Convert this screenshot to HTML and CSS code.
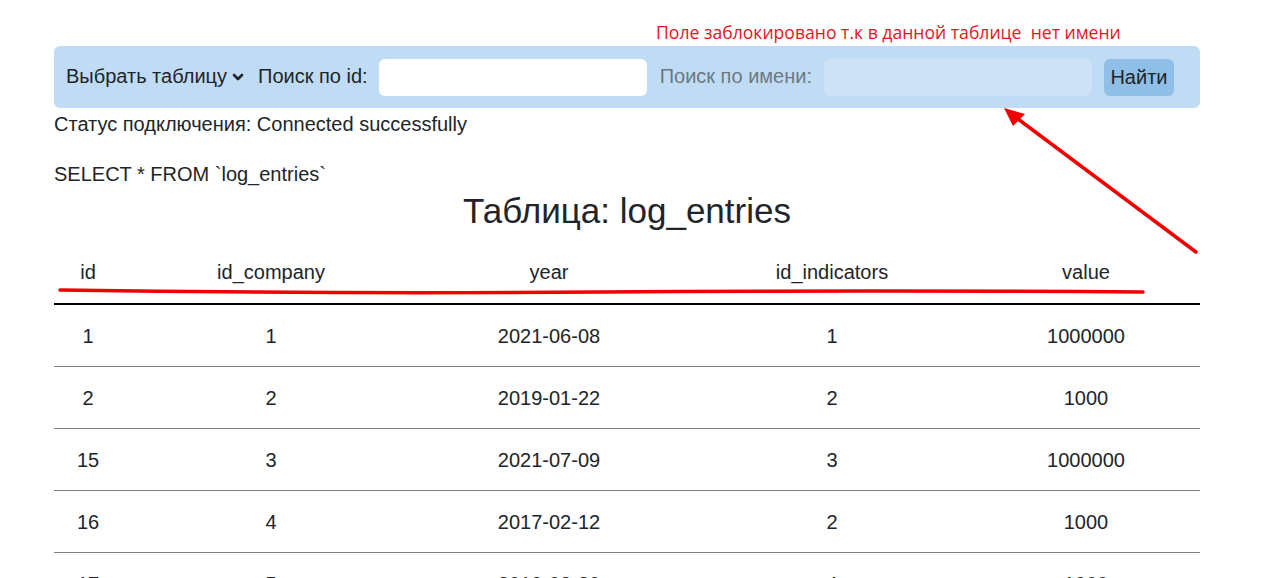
FILE: index.html
```html
<!DOCTYPE html>
<html lang="ru">
<head>
<meta charset="utf-8">
<title>log_entries</title>
<link rel="stylesheet" href="styles.css">
</head>
<body>
<div class="page">
  <nav class="toolbar">
    <div class="select">Выбрать таблицу
      <svg class="chev" width="12" height="10" viewBox="0 0 12 10"><path d="M2 3 L6 7 L10 3" fill="none" stroke="#212529" stroke-width="2.6" stroke-linecap="round" stroke-linejoin="round"/></svg>
    </div>
    <label class="lbl">Поиск по id:</label>
    <div class="input"></div>
    <label class="lbl lbl-disabled">Поиск по имени:</label>
    <div class="input input-disabled"></div>
    <button class="btn">Найти</button>
  </nav>
  <p class="status">Статус подключения: Connected successfully</p>
  <p class="query">SELECT * FROM `log_entries`</p>
  <h2 class="title">Таблица: log_entries</h2>
  <table class="data">
    <colgroup>
      <col class="c1"><col class="c2"><col class="c3"><col class="c4"><col class="c5">
    </colgroup>
    <thead>
      <tr><th>id</th><th>id_company</th><th>year</th><th>id_indicators</th><th class="last">value</th></tr>
    </thead>
    <tbody>
      <tr><td>1</td><td>1</td><td>2021-06-08</td><td>1</td><td class="last">1000000</td></tr>
      <tr><td>2</td><td>2</td><td>2019-01-22</td><td>2</td><td class="last">1000</td></tr>
      <tr><td>15</td><td>3</td><td>2021-07-09</td><td>3</td><td class="last">1000000</td></tr>
      <tr><td>16</td><td>4</td><td>2017-02-12</td><td>2</td><td class="last">1000</td></tr>
      <tr><td>17</td><td>5</td><td>2019-03-30</td><td>4</td><td class="last">1000</td></tr>
    </tbody>
  </table>
</div>
<div class="note">Поле заблокировано т.к в данной таблице&nbsp; нет имени</div>
<svg class="marks" width="1271" height="578" viewBox="0 0 1271 578">
  <path d="M60 290 Q 330 294 600 292 T 1143 292" fill="none" stroke="#f00000" stroke-width="3.5" stroke-linecap="round"/>
  <line x1="1196" y1="252" x2="1014" y2="116" stroke="#f00000" stroke-width="3.5" stroke-linecap="round"/>
  <polygon points="1004,108 1025,114 1013,126" fill="#f00000"/>
</svg>
</body>
</html>
```
FILE: styles.css
```css
html, body {
  margin: 0;
  padding: 0;
  background: #ffffff;
}
body {
  font-family: "Liberation Sans", Arial, sans-serif;
  color: #212529;
  font-size: 20px;
  position: relative;
  overflow: hidden;
  height: 578px;
}
.page {
  width: 1146px;
  margin-left: 54px;
  padding-top: 46px;
}
.toolbar {
  height: 62px;
  background: #c0dcf4;
  border-radius: 6px;
  display: flex;
  align-items: center;
  padding: 0 12px 2px;
  box-sizing: border-box;
}
.select {
  display: flex;
  align-items: center;
  gap: 5px;
  margin-right: 14px;
}
.chev {
  margin-top: 1px;
}
.lbl {
  margin-right: 11px;
}
.lbl-disabled {
  color: #6d7882;
  margin-right: 12px;
}
.input {
  width: 268px;
  height: 37px;
  border-radius: 6px;
  background: #ffffff;
  margin-right: 13px;
  margin-top: 2px;
}
.input-disabled {
  background: #cde2f5;
  margin-right: 12px;
}
.btn {
  font-family: inherit;
  font-size: 20px;
  color: #212529;
  background: #8fbfe7;
  border: none;
  border-radius: 6px;
  width: 70px;
  height: 37px;
  padding: 0;
  margin-top: 2px;
}
.status, .query {
  margin: 0;
  line-height: 30px;
}
.status {
  margin-top: 1px;
}
.query {
  margin-top: 20px;
}
.title {
  margin: 0;
  font-weight: normal;
  font-size: 35px;
  line-height: 44px;
  text-align: center;
}
.data {
  width: 1146px;
  margin-top: 9px;
  border-collapse: collapse;
  table-layout: fixed;
}
.c1 { width: 68px; }
.c2 { width: 298px; }
.c3 { width: 258px; }
.c4 { width: 308px; }
.c5 { width: 214px; }
.data th {
  font-weight: normal;
  height: 61px;
  padding: 0;
  text-align: center;
  border-bottom: 2px solid #000000;
}
.data td {
  height: 62px;
  padding: 2px 0 0;
  box-sizing: border-box;
  text-align: center;
  border-bottom: 1px solid #808080;
}
.data td.last, .data th.last {
  padding-right: 14px;
}
.note {
  position: absolute;
  left: 656px;
  top: 20px;
  font-family: "Open Sans", "Noto Sans", sans-serif;
  font-size: 17.6px;
  color: #e8141b;
  white-space: pre;
}
.marks {
  position: absolute;
  left: 0;
  top: 0;
  pointer-events: none;
}
```
